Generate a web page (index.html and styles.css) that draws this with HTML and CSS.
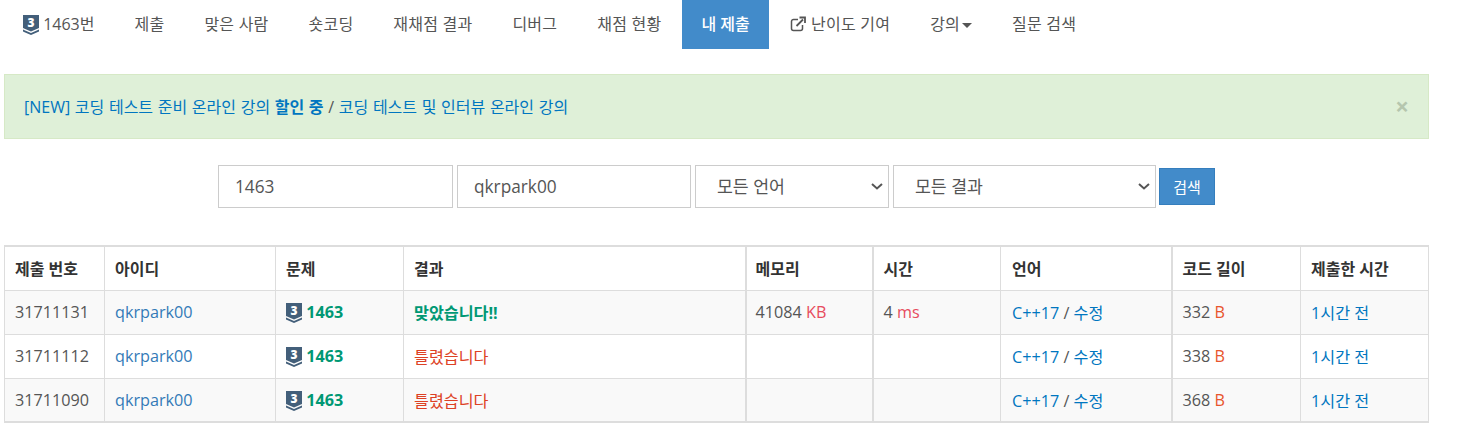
FILE: index.html
```html
<!DOCTYPE html>
<html lang="ko">
  <head>
    <meta charset="UTF-8" />
    <title>채점 현황</title>
    <link rel="stylesheet" href="styles.css">
  </head>
  <body>
    <ul class="nav">
      <li class="nav-first">
        <a href="#">
          <svg class="tier" viewBox="0 0 16 20">
            <path d="M0 0H16V13L8 16.5L0 13Z" fill="#435f7a" />
            <path d="M0 14.6L8 18L16 14.6V16.6L8 20L0 16.6Z" fill="#435f7a" />
            <text x="8" y="11.5" text-anchor="middle" class="tier-num">3</text>
          </svg>
          1463번
        </a>
      </li>
      <li><a href="#">제출</a></li>
      <li><a href="#">맞은 사람</a></li>
      <li><a href="#">숏코딩</a></li>
      <li><a href="#">재채점 결과</a></li>
      <li><a href="#">디버그</a></li>
      <li><a href="#">채점 현황</a></li>
      <li class="active"><a href="#">내 제출</a></li>
      <li>
        <a href="#">
          <svg class="ext" viewBox="0 0 16 16">
            <path d="M8 3.5H3.5A2 2 0 0 0 1.5 5.5V12.5A2 2 0 0 0 3.5 14.500H10.500A2 2 0 0 0 12.500 12.500V9" fill="none" stroke="#555" stroke-width="1.500" />
            <path d="M6.500 10L13 3.500M9.500 1.500H15V7" fill="none" stroke="#555" stroke-width="1.800" />
          </svg>
          난이도 기여
        </a>
      </li>
      <li><a href="#">강의<span class="caret"></span></a></li>
      <li><a href="#">질문 검색</a></li>
    </ul>

    <div class="alert">
      <span>
        <a href="#">[NEW] 코딩 테스트 준비 온라인 강의 <b>할인 중</b></a>
        /
        <a href="#">코딩 테스트 및 인터뷰 온라인 강의</a>
      </span>
      <span class="close">×</span>
    </div>

    <form class="search">
      <input type="text" class="w-problem" value="1463" />
      <input type="text" class="w-user" value="qkrpark00" />
      <select class="w-lang"><option>모든 언어</option></select>
      <select class="w-result"><option>모든 결과</option></select>
      <button type="button">검색</button>
    </form>

    <table class="status">
      <colgroup>
        <col class="c1" /><col class="c2" /><col class="c3" /><col class="c4" /><col class="c5" />
        <col class="c6" /><col class="c7" /><col class="c8" /><col class="c9" />
      </colgroup>
      <thead>
        <tr>
          <th>제출 번호</th><th>아이디</th><th>문제</th><th>결과</th><th class="thick mem">메모리</th>
          <th class="thick">시간</th><th class="lang">언어</th><th class="thick">코드 길이</th><th>제출한 시간</th>
        </tr>
      </thead>
      <tbody>
        <tr>
          <td>31711131</td>
          <td><a class="user" href="#">qkrpark00</a></td>
          <td>
            <a class="prob" href="#">
              <svg class="tier" viewBox="0 0 16 20">
                <path d="M0 0H16V13L8 16.5L0 13Z" fill="#435f7a" />
                <path d="M0 14.6L8 18L16 14.6V16.6L8 20L0 16.6Z" fill="#435f7a" />
                <text x="8" y="11.5" text-anchor="middle" class="tier-num">3</text>
              </svg>
              1463
            </a>
          </td>
          <td class="ac">맞았습니다!!</td>
          <td class="thick mem">41084 <span class="unit">KB</span></td>
          <td class="thick">4 <span class="unit">ms</span></td>
          <td class="lang"><a href="#">C++17</a> / <a href="#">수정</a></td>
          <td class="thick">332 <span class="unit-b">B</span></td>
          <td><a href="#">1시간 전</a></td>
        </tr>
        <tr>
          <td>31711112</td>
          <td><a class="user" href="#">qkrpark00</a></td>
          <td>
            <a class="prob" href="#">
              <svg class="tier" viewBox="0 0 16 20">
                <path d="M0 0H16V13L8 16.5L0 13Z" fill="#435f7a" />
                <path d="M0 14.6L8 18L16 14.6V16.6L8 20L0 16.6Z" fill="#435f7a" />
                <text x="8" y="11.5" text-anchor="middle" class="tier-num">3</text>
              </svg>
              1463
            </a>
          </td>
          <td class="wa">틀렸습니다</td>
          <td class="thick mem"></td>
          <td class="thick"></td>
          <td class="lang"><a href="#">C++17</a> / <a href="#">수정</a></td>
          <td class="thick">338 <span class="unit-b">B</span></td>
          <td><a href="#">1시간 전</a></td>
        </tr>
        <tr>
          <td>31711090</td>
          <td><a class="user" href="#">qkrpark00</a></td>
          <td>
            <a class="prob" href="#">
              <svg class="tier" viewBox="0 0 16 20">
                <path d="M0 0H16V13L8 16.5L0 13Z" fill="#435f7a" />
                <path d="M0 14.6L8 18L16 14.6V16.6L8 20L0 16.6Z" fill="#435f7a" />
                <text x="8" y="11.5" text-anchor="middle" class="tier-num">3</text>
              </svg>
              1463
            </a>
          </td>
          <td class="wa">틀렸습니다</td>
          <td class="thick mem"></td>
          <td class="thick"></td>
          <td class="lang"><a href="#">C++17</a> / <a href="#">수정</a></td>
          <td class="thick">368 <span class="unit-b">B</span></td>
          <td><a href="#">1시간 전</a></td>
        </tr>
      </tbody>
    </table>
  </body>
</html>
```

FILE: styles.css
```css
body {
  margin: 0;
  padding: 0 4px;
  width: 1425px;
  background-color: #fff;
  color: #555;
  font-family: "Open Sans", "Noto Sans CJK KR", sans-serif;
  font-size: 16px;
}

a {
  color: #0076c0;
  text-decoration: none;
}

.tier {
  width: 16px;
  height: 20px;
  vertical-align: -5px;
}

.tier-num {
  font-family: "Open Sans", sans-serif;
  font-size: 12px;
  font-weight: 800;
  fill: #fff;
}

/* top tabs */
.nav {
  display: flex;
  list-style: none;
  margin: 0;
  padding: 0;
  height: 49px;
}

.nav a {
  display: block;
  padding: 11px 20px 0;
  height: 49px;
  box-sizing: border-box;
  color: #555;
  letter-spacing: 0.22px;
  white-space: nowrap;
}

.nav .nav-first a {
  padding-left: 19px;
  letter-spacing: 0;
}

.nav .active {
  margin: 0 1px;
}

.nav .active a {
  padding-left: 19px;
  padding-right: 19px;
  background-color: #428bca;
  color: #fff;
  font-weight: 500;
  letter-spacing: 0;
}

.ext {
  width: 16px;
  height: 16px;
  margin-right: 1px;
  vertical-align: -2px;
}

.caret {
  display: inline-block;
  margin-left: 2px;
  vertical-align: 2px;
  border-top: 5px solid #555;
  border-left: 5px solid transparent;
  border-right: 5px solid transparent;
}

.alert {
  display: flex;
  justify-content: space-between;
  align-items: center;
  box-sizing: border-box;
  height: 65px;
  margin-top: 25px;
  padding: 0 19px 2px;
  background-color: #dff0d8;
  border: 1px solid #d6e9c6;
  color: #555;
  word-spacing: 0.5px;
}

.alert b {
  font-weight: 700;
}

.close {
  font-size: 24px;
  line-height: 1;
  font-weight: 700;
  color: #b5c6ae;
}

/* search form */
.search {
  display: flex;
  justify-content: center;
  align-items: center;
  gap: 4px;
  margin-top: 26px;
}

.search input,
.search select {
  box-sizing: border-box;
  height: 43px;
  padding: 0 16px;
  background-color: #fff;
  border: 1px solid #ccc;
  border-radius: 0;
  color: #555;
  font-family: inherit;
  font-size: 17.25px;
}

.search select {
  padding-left: 21px;
  appearance: none;
  background-image: url("data:image/svg+xml,%3Csvg xmlns='http://www.w3.org/2000/svg' width='12' height='7'%3E%3Cpath d='M1 1L6 5.500L11 1' fill='none' stroke='%23555' stroke-width='2'/%3E%3C/svg%3E");
  background-repeat: no-repeat;
  background-position: right 5px center;
}

.w-problem {
  width: 235px;
}

.w-user {
  width: 234px;
}

.w-lang {
  width: 194px;
}

.w-result {
  width: 263px;
}

.search button {
  width: 56px;
  height: 37px;
  margin-left: -1px;
  padding: 0;
  background-color: #428bca;
  border: 1px solid #357ebd;
  color: #fff;
  font-family: inherit;
  font-size: 15px;
}

/* results table */
.status {
  width: 1424px;
  margin-top: 37px;
  table-layout: fixed;
  border-collapse: collapse;
  border-top: 2px solid #ddd;
  border-bottom: 2px solid #ddd;
  font-size: 16.2px;
}

.c1 { width: 100px; }
.c2 { width: 171px; }
.c3 { width: 128px; }
.c4 { width: 342px; }
.c5 { width: 127px; }
.c6 { width: 128px; }
.c7 { width: 171px; }
.c8 { width: 129px; }
.c9 { width: 128px; }

.status th,
.status td {
  box-sizing: border-box;
  height: 44px;
  padding: 0 10px;
  border: 1px solid #ddd;
  text-align: left;
  white-space: nowrap;
}

.status th {
  color: #333;
  font-size: 16px;
  font-weight: 700;
}

.status .thick {
  border-left-width: 2px;
}

.status .mem {
  padding-left: 9px;
}

.status .lang {
  padding-left: 11px;
}

.status tbody tr:nth-child(odd) {
  background-color: #f9f9f9;
}

.user {
  color: #337ab7;
}

.prob {
  color: #009874;
  font-weight: 700;
}

.ac {
  color: #009874;
  font-weight: 700;
}

.wa {
  color: #dd4124;
}

.unit {
  color: #e74c5e;
}

.unit-b {
  color: #e8552d;
}
```
